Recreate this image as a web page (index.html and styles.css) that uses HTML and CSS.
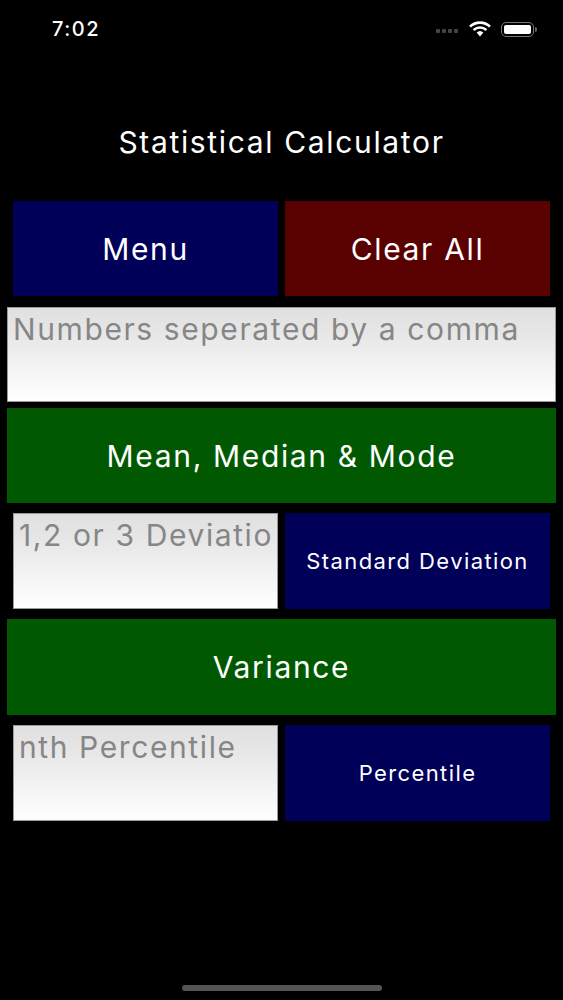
FILE: index.html
```html
<!DOCTYPE html>
<html lang="en">

<head>
    <meta charset="UTF-8">
    <meta name="viewport" content="width=device-width, initial-scale=1.0">
    <title>Statistical Calculator</title>
    <link rel="stylesheet" href="styles.css">
</head>

<body>

    <div class="status-bar">
        <span class="time">7:02</span>
        <div class="status-icons">
            <div class="signal"><i></i><i></i><i></i><i></i></div>
            <svg class="wifi" width="22" height="16" viewBox="0 0 22 16">
                <path d="M1 5.6 A14.5 14.5 0 0 1 21 5.6" fill="none" stroke="#fff" stroke-width="2.6" />
                <path d="M4.6 9 A9.4 9.4 0 0 1 17.4 9" fill="none" stroke="#fff" stroke-width="2.6" />
                <path d="M7.6 11.6 A5 5 0 0 1 14.4 11.6 L11 15.4 Z" fill="#fff" />
            </svg>
            <div class="battery"><div class="battery-fill"></div></div>
            <div class="battery-cap"></div>
        </div>
    </div>

    <h1 class="title">Statistical Calculator</h1>

    <div class="calculator">
        <div class="row inset">
            <button class="button blue short">Menu</button>
            <button class="button red short">Clear All</button>
        </div>
        <div class="group">
            <textarea class="field short" wrap="off" placeholder="Numbers seperated by a comma"></textarea>
            <button class="button green short">Mean, Median &amp; Mode</button>
        </div>
        <div class="row inset">
            <textarea class="field" wrap="off" placeholder="1,2 or 3 Deviations"></textarea>
            <button class="button blue small">Standard Deviation</button>
        </div>
        <button class="button green">Variance</button>
        <div class="row inset">
            <textarea class="field" wrap="off" placeholder="nth Percentile"></textarea>
            <button class="button blue small">Percentile</button>
        </div>
    </div>

    <div class="home-indicator"></div>

</body>

</html>
```

FILE: styles.css
```css
html,
body {
    height: 1000px;
}

body {
    margin: 0;
    position: relative;
    overflow: hidden;
    background-color: #000;
    color: #fff;
    font-family: 'Inter', 'Roboto', sans-serif;
}

/* Status bar */
.status-bar {
    display: flex;
    justify-content: space-between;
    align-items: center;
    height: 58px;
    padding: 0 26px 0 52px;
}

.time {
    font-size: 20px;
    font-weight: 500;
    letter-spacing: 1.5px;
}

.status-icons {
    display: flex;
    align-items: center;
}

.signal {
    display: flex;
    gap: 2px;
    margin-right: 11px;
    margin-top: 4px;
}

.signal i {
    width: 4px;
    height: 4px;
    border-radius: 1px;
    background-color: #444;
}

.wifi {
    margin-right: 10px;
}

.battery {
    width: 33px;
    height: 15px;
    box-sizing: border-box;
    padding: 2px;
    border: 1.5px solid #777;
    border-radius: 5px;
}

.battery-fill {
    height: 100%;
    border-radius: 2px;
    background-color: #fff;
}

.battery-cap {
    width: 2px;
    height: 5px;
    margin-left: 1px;
    border-radius: 0 2px 2px 0;
    background-color: #666;
}

/* Title */
.title {
    margin: 66px 0 40px;
    height: 37px;
    line-height: 37px;
    font-size: 30px;
    font-weight: 400;
    text-align: center;
    letter-spacing: 1.65px;
}

/* Calculator */
.calculator {
    display: flex;
    flex-direction: column;
    gap: 10px;
    padding: 0 7px;
}

.group {
    display: flex;
    flex-direction: column;
    gap: 6px;
    margin-top: 1px;
}

.row {
    display: grid;
    grid-template-columns: 265px 265px;
    gap: 7px;
}

.inset {
    padding: 0 6px;
}

.button {
    height: 96px;
    border: none;
    padding: 0;
    color: #fff;
    font-family: inherit;
    font-size: 30px;
    letter-spacing: 1.65px;
    cursor: pointer;
}

.small {
    font-size: 22px;
    letter-spacing: 1.4px;
}

.blue {
    background-color: #000059;
}

.red {
    background-color: #590000;
}

.green {
    background-color: #005900;
}

.field {
    display: block;
    box-sizing: border-box;
    width: 100%;
    height: 96px;
    padding: 3px 5px;
    border: 1px solid #999;
    border-radius: 0;
    outline: none;
    resize: none;
    overflow: hidden;
    background: linear-gradient(#e0e0e0, #e6e6e6 25%, #fafafa 85%, #fefefe);
    font-family: inherit;
    font-size: 30px;
    line-height: 36px;
    letter-spacing: 1.6px;
}

.short {
    height: 95px;
}

.field::placeholder {
    color: #868686;
    opacity: 1;
    overflow: hidden;
}

.home-indicator {
    position: absolute;
    left: 182px;
    bottom: 9px;
    width: 200px;
    height: 6px;
    border-radius: 3px;
    background-color: #555;
}
```
